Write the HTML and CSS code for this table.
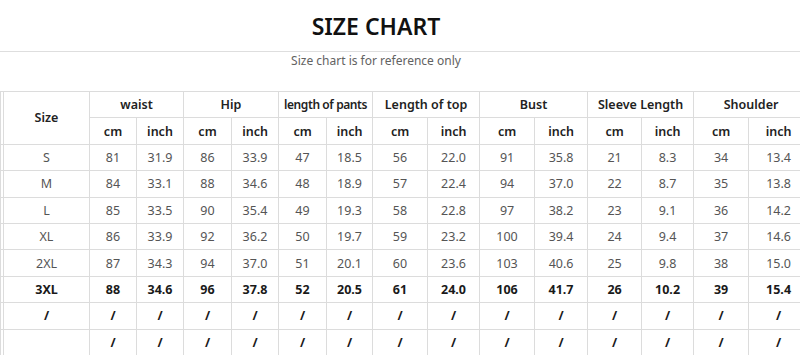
FILE: index.html
```html
<!DOCTYPE html>
<html lang="en">
<head>
  <meta charset="UTF-8" />
  <title>Size Chart</title>
  <link rel="stylesheet" href="styles.css">
</head>
<body>

  <div class="chart-head">
    <h1>SIZE CHART</h1>
  </div>
  <p class="note">Size chart is for reference only</p>

  <table class="size-table">
    <colgroup>
      <col style="width: 3px">
      <col style="width: 86px">
      <col style="width: 47px"><col style="width: 47px">
      <col style="width: 48px"><col style="width: 47px">
      <col style="width: 48px"><col style="width: 46px">
      <col style="width: 55px"><col style="width: 52px">
      <col style="width: 55px"><col style="width: 53px">
      <col style="width: 54px"><col style="width: 52px">
      <col style="width: 55px"><col style="width: 60px">
    </colgroup>
    <thead>
      <tr>
        <th rowspan="2"></th>
        <th rowspan="2">Size</th>
        <th colspan="2">waist</th>
        <th colspan="2">Hip</th>
        <th colspan="2" class="tight">length of pants</th>
        <th colspan="2">Length of top</th>
        <th colspan="2">Bust</th>
        <th colspan="2">Sleeve Length</th>
        <th colspan="2">Shoulder</th>
      </tr>
      <tr>
        <th>cm</th><th>inch</th>
        <th>cm</th><th>inch</th>
        <th>cm</th><th>inch</th>
        <th>cm</th><th>inch</th>
        <th>cm</th><th>inch</th>
        <th>cm</th><th>inch</th>
        <th>cm</th><th>inch</th>
      </tr>
    </thead>
    <tbody>
      <tr><td></td><td>S</td><td>81</td><td>31.9</td><td>86</td><td>33.9</td><td>47</td><td>18.5</td><td>56</td><td>22.0</td><td>91</td><td>35.8</td><td>21</td><td>8.3</td><td>34</td><td>13.4</td></tr>
      <tr><td></td><td>M</td><td>84</td><td>33.1</td><td>88</td><td>34.6</td><td>48</td><td>18.9</td><td>57</td><td>22.4</td><td>94</td><td>37.0</td><td>22</td><td>8.7</td><td>35</td><td>13.8</td></tr>
      <tr><td></td><td>L</td><td>85</td><td>33.5</td><td>90</td><td>35.4</td><td>49</td><td>19.3</td><td>58</td><td>22.8</td><td>97</td><td>38.2</td><td>23</td><td>9.1</td><td>36</td><td>14.2</td></tr>
      <tr><td></td><td>XL</td><td>86</td><td>33.9</td><td>92</td><td>36.2</td><td>50</td><td>19.7</td><td>59</td><td>23.2</td><td>100</td><td>39.4</td><td>24</td><td>9.4</td><td>37</td><td>14.6</td></tr>
      <tr><td></td><td>2XL</td><td>87</td><td>34.3</td><td>94</td><td>37.0</td><td>51</td><td>20.1</td><td>60</td><td>23.6</td><td>103</td><td>40.6</td><td>25</td><td>9.8</td><td>38</td><td>15.0</td></tr>
      <tr class="strong"><td></td><td>3XL</td><td>88</td><td>34.6</td><td>96</td><td>37.8</td><td>52</td><td>20.5</td><td>61</td><td>24.0</td><td>106</td><td>41.7</td><td>26</td><td>10.2</td><td>39</td><td>15.4</td></tr>
      <tr class="strong"><td></td><td>/</td><td>/</td><td>/</td><td>/</td><td>/</td><td>/</td><td>/</td><td>/</td><td>/</td><td>/</td><td>/</td><td>/</td><td>/</td><td>/</td><td>/</td></tr>
      <tr class="strong"><td></td><td></td><td>/</td><td>/</td><td>/</td><td>/</td><td>/</td><td>/</td><td>/</td><td>/</td><td>/</td><td>/</td><td>/</td><td>/</td><td>/</td><td>/</td></tr>
    </tbody>
  </table>

</body>
</html>
```

FILE: styles.css
```css
* { margin: 0; padding: 0; box-sizing: border-box; }

body {
  font-family: "Noto Sans", "Liberation Sans", sans-serif;
  background: #fff;
  color: #333;
  width: 800px;
  height: 355px;
  overflow: hidden;
}

.chart-head {
  height: 52px;
  border-bottom: 1px solid #dedede;
  padding-right: 48px;
  text-align: center;
}

.chart-head h1 {
  font-size: 23px;
  font-weight: 600;
  line-height: 52px;
  color: #111;
}

.note {
  padding-right: 48px;
  text-align: center;
  font-size: 12px;
  line-height: 16px;
  margin-top: 1px;
  color: #626262;
}

.size-table {
  margin-top: 22px;
  table-layout: fixed;
  width: 808px;
  border-collapse: collapse;
  font-size: 12.5px;
}

.size-table th,
.size-table td {
  height: 26.4px;
  border: 1px solid #dcdcdc;
  text-align: center;
  vertical-align: middle;
  white-space: nowrap;
  overflow: hidden;
}

.size-table th {
  font-weight: 600;
  color: #222;
}

.size-table th.tight {
  font-size: 12px;
  letter-spacing: -0.4px;
}

.size-table td {
  font-weight: 400;
  color: #555;
}

.size-table tr.strong td {
  font-weight: 700;
  color: #1a1a1a;
}
```
